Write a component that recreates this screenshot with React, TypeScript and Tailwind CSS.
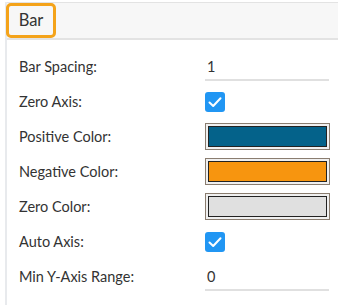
import React from "react";

function Check() {
  return (
    <div className="w-[20px] h-[20px] rounded-[3px] bg-[#2196f3] flex items-center justify-center">
      <svg width="16" height="16" viewBox="0 0 16 16" fill="none">
        <path d="M2.5 8.5 L6.2 12 L13.5 4.2" stroke="white" strokeWidth="2" strokeLinecap="round" strokeLinejoin="round" />
      </svg>
    </div>
  );
}

function Swatch({ color }: { color: string }) {
  return (
    <div className="w-[125px] h-[27px] border border-[#8a7d70] bg-[#f0f0f0] p-[2px]">
      <div className="w-full h-full border border-[#222]" style={{ background: color }} />
    </div>
  );
}

function Row({ label, children }: { label: string; children: React.ReactNode }) {
  return (
    <div className="flex items-center h-[35px]">
      <div className="w-[198px] pl-[12px] text-[14.5px] text-[#333]">{label}</div>
      <div className="flex items-center">{children}</div>
    </div>
  );
}

function Input({ value }: { value: string }) {
  return (
    <div className="w-[124px] h-[29px] border-b-2 border-[#e0e0e0] flex items-center pt-[3px] pl-[2px] text-[14.5px] text-[#333]">
      {value}
    </div>
  );
}

export default function App() {
  return (
    <div className="w-[338px] h-[305px] bg-white pl-[5px] pt-[2px]" style={{ fontFamily: "Lato, 'Open Sans', sans-serif" }}>
      <div className="h-full border-l-2 border-[#e8eaed]">
        <div className="h-[38px] bg-[#f7f7f7] border-t border-b-2 border-[#e3e3e3] flex items-start">
          <div className="ml-[-1px] mt-0 w-[50px] h-[35px] border-[3px] border-[#f4a31a] rounded-[5px] flex items-center justify-center text-[16.5px] text-[#333]">
            Bar
          </div>
        </div>
        <div className="pt-[9px]">
          <Row label="Bar Spacing:"><Input value="1" /></Row>
          <Row label="Zero Axis:"><Check /></Row>
          <Row label="Positive Color:"><Swatch color="#04628a" /></Row>
          <Row label="Negative Color:"><Swatch color="#f7950f" /></Row>
          <Row label="Zero Color:"><Swatch color="#e0e0e0" /></Row>
          <Row label="Auto Axis:"><Check /></Row>
          <Row label="Min Y-Axis Range:"><Input value="0" /></Row>
        </div>
      </div>
    </div>
  );
}
